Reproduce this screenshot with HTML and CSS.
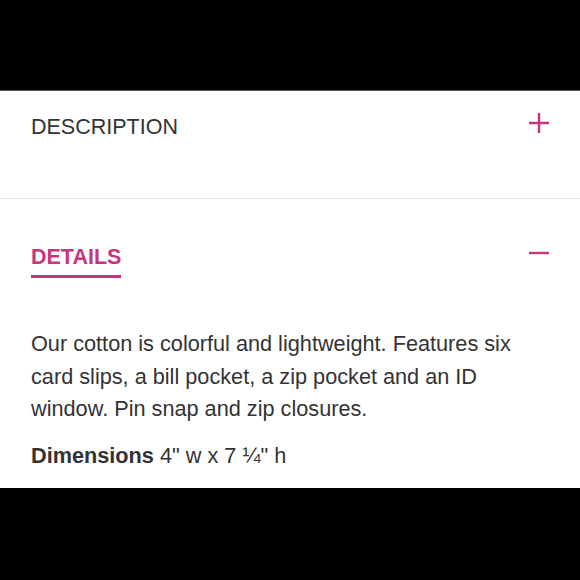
FILE: index.html
```html
<!DOCTYPE html>
<html lang="en">
<head>
    <meta charset="UTF-8">
    <meta name="viewport" content="width=device-width, initial-scale=1.0">
    <title>Product Details</title>
    <link rel="stylesheet" href="styles.css">
</head>
<body>
    <div class="bar-top"></div>

    <div class="panel">
        <div class="accordion-item closed">
            <div class="accordion-head">
                <h3 class="accordion-title">DESCRIPTION</h3>
                <svg class="toggle-icon" width="20" height="20" viewBox="0 0 20 20">
                    <path d="M0 10H20M10 0V20" stroke="#c7357f" stroke-width="2.4" fill="none"/>
                </svg>
            </div>
        </div>

        <div class="accordion-item open">
            <div class="accordion-head">
                <h3 class="accordion-title active">DETAILS</h3>
                <svg class="toggle-icon" width="20" height="20" viewBox="0 0 20 20">
                    <path d="M0 10H20" stroke="#c7357f" stroke-width="2.4" fill="none"/>
                </svg>
            </div>
            <div class="accordion-body">
                <p>Our cotton is colorful and lightweight. Features six card slips, a bill pocket, a zip pocket and an ID window. Pin snap and zip closures.</p>
                <p class="dims"><strong>Dimensions</strong> 4" w x 7 ¼" h</p>
            </div>
        </div>
    </div>

    <div class="bar-bottom"></div>
</body>
</html>
```

FILE: styles.css
```css
body {
    font-family: "Liberation Sans", Arial, sans-serif;
    margin: 0;
    padding: 0;
    background-color: #000;
    color: #333;
}

.bar-top {
    height: 90px;
    border-bottom: 1px solid #555;
}

.panel {
    background-color: #fff;
    height: 397px;
    overflow: hidden;
}

.accordion-item.closed {
    height: 107px;
    border-bottom: 1px solid #e4e4e4;
}

.accordion-head {
    display: flex;
    justify-content: space-between;
    align-items: flex-start;
    padding: 0 31px;
}

.closed .accordion-head {
    padding-top: 24px;
}

.open .accordion-head {
    padding-top: 46px;
}

.accordion-title {
    margin: 0;
    font-size: 21.5px;
    font-weight: normal;
    line-height: 24px;
    color: #333;
}

.accordion-title.active {
    font-weight: bold;
    color: #c7357f;
    padding-bottom: 6px;
    border-bottom: 3px solid #c7357f;
}

.toggle-icon {
    margin-top: -2px;
}

.accordion-body {
    padding: 0 31px;
    margin-top: 50px;
}

.accordion-body p {
    margin: 0;
    font-size: 21.7px;
    line-height: 32.5px;
}

.accordion-body .dims {
    margin-top: 14px;
}
```
